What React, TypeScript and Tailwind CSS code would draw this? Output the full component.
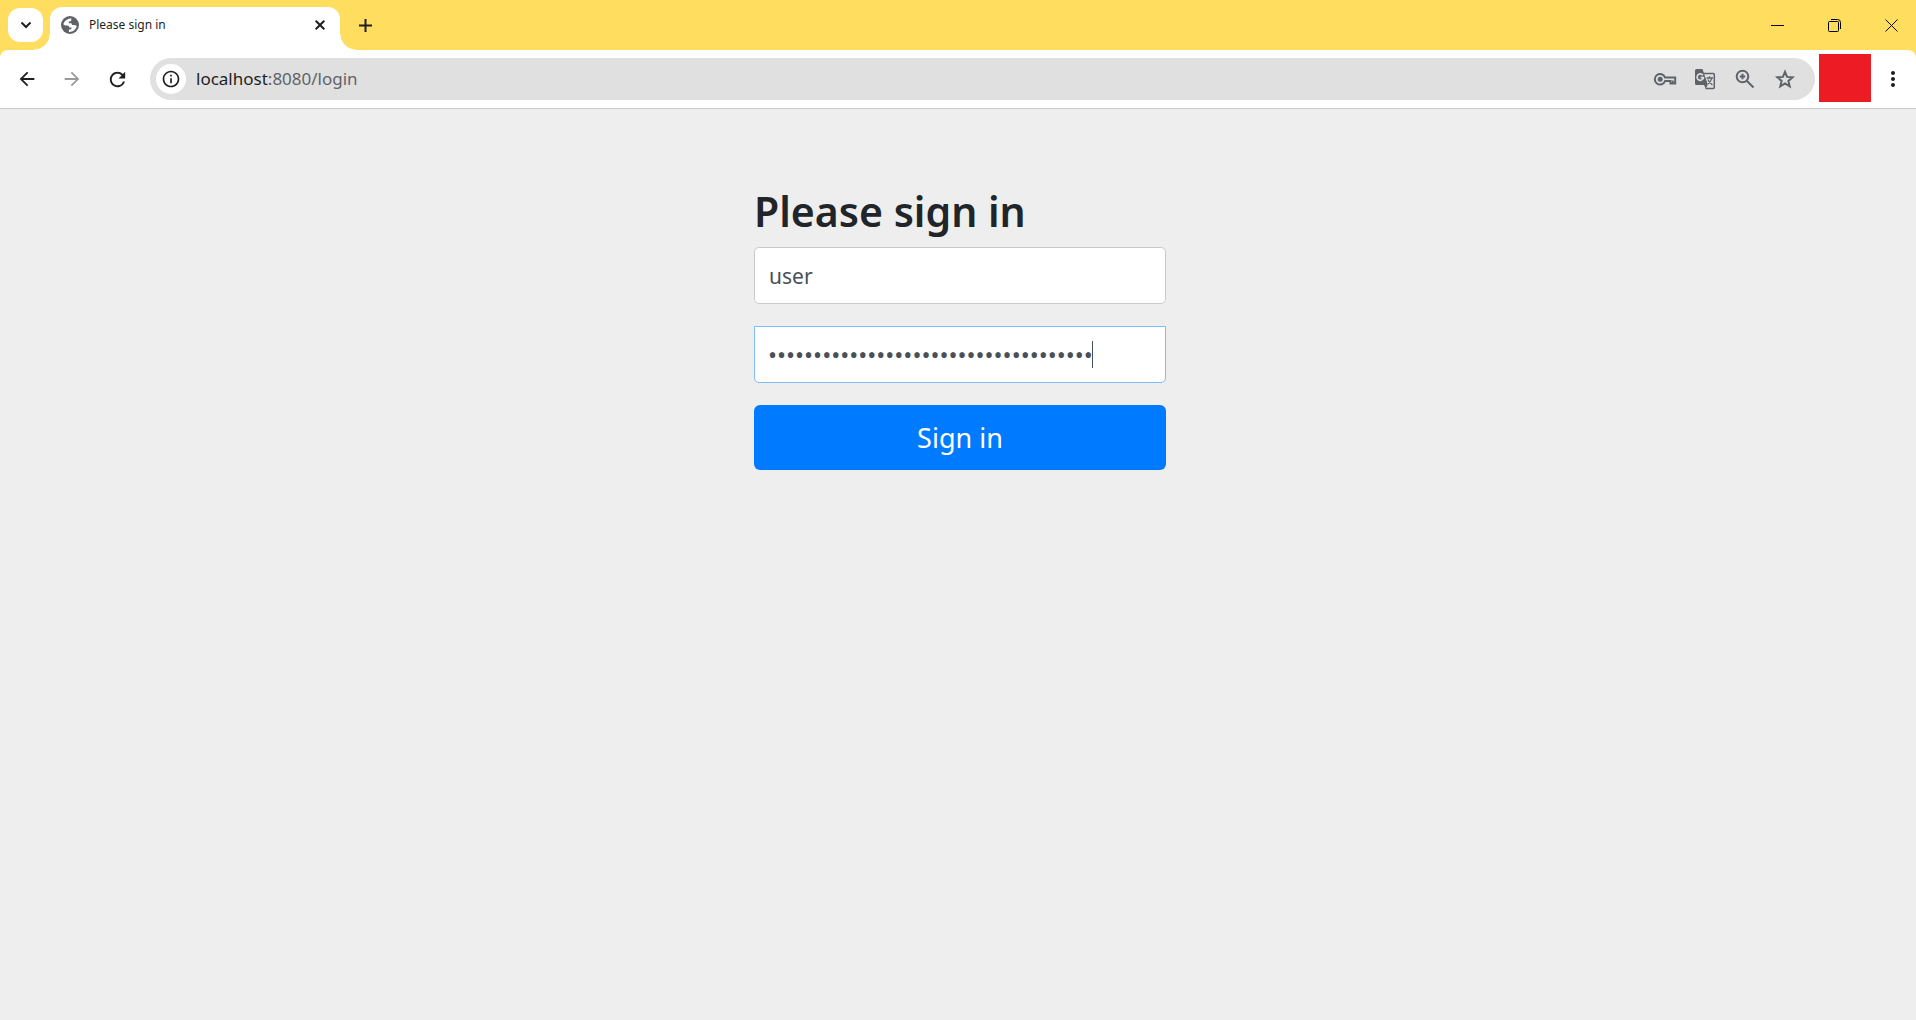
import { MdArrowBack, MdArrowForward, MdRefresh, MdInfoOutline, MdMoreVert } from "react-icons/md";

function GlobeIcon() {
  return (
    <svg width="18" height="18" viewBox="0 0 18 18">
      <circle cx="9" cy="9" r="9" fill="#5f6368" />
      <path d="M10.300 2.200C7 2.400 3.600 4.600 2.300 8.200c1 1 2.300 1.300 3.900 1.200 1.400 0 2 .8 2.100 2h2.300c.3 1.500-1 2-2.700 2.200v2.300c3.700.3 7-2 7.900-5.900-.9-.8-2.100-1-3.600-.9-1 0-1.600-.7-1.700-1.900H7.800c-.5-1.200.3-2 2.400-2.100z" fill="#fff" />
    </svg>
  );
}

function KeyIcon() {
  return (
    <svg width="24" height="24" viewBox="0 0 24 24" fill="none" stroke="currentColor" strokeWidth="2">
      <path d="M12.100 10.500H22.200V16.500H17.500V14H12.100A5.300 5.300 0 1 1 12.100 10.500Z" />
      <path d="M19.800 13.500V17" />
      <circle cx="7.200" cy="12.300" r="2.500" fill="currentColor" stroke="none" />
    </svg>
  );
}

function TranslateIcon() {
  return (
    <svg width="24" height="24" viewBox="0 0 24 24" fill="none">
      <path d="M9 6.500H20.300A1 1 0 0 1 21.300 7.500V20.500A1 1 0 0 1 20.300 21.500H12.500" stroke="currentColor" strokeWidth="1.500" />
      <path d="M3.500 2H9.500L14.800 17.500L12.800 21.800L11 18H3.500A1.500 1.500 0 0 1 2 16.500V3.500A1.500 1.500 0 0 1 3.500 2Z" fill="currentColor" />
      <path d="M9.800 8.200A3.200 3.200 0 1 0 10.400 10.600H7.600" stroke="#e0e0e0" strokeWidth="1.600" />
      <path d="M13.500 11H20M16.500 9.300V11M18.800 11C18.300 14 16.500 15.800 15 17M14.800 12.500C16 15 17.500 16.500 19.500 18" stroke="currentColor" strokeWidth="1.300" />
    </svg>
  );
}

function ZoomIcon() {
  return (
    <svg width="24" height="24" viewBox="0 0 24 24" fill="none" stroke="currentColor" strokeWidth="2">
      <circle cx="9.500" cy="9.500" r="5.800" />
      <path d="M13.700 13.700L20.500 20.500M9.500 6.700V12.300M6.700 9.500H12.300" />
    </svg>
  );
}

function StarIcon() {
  return (
    <svg width="24" height="24" viewBox="0 0 24 24" fill="none" stroke="currentColor" strokeWidth="2">
      <path d="M12 4.800L14.100 9.900L19.600 10.300L15.400 13.900L16.700 19.300L12 16.400L7.300 19.300L8.600 13.900L4.400 10.300L9.900 9.900Z" />
    </svg>
  );
}

function WindowControls() {
  return (
    <div className="ml-auto flex h-full items-center gap-11 pr-[18px]">
      <button aria-label="Minimize">
        <svg width="13" height="13" viewBox="0 0 13 13" stroke="#000" fill="none" shapeRendering="crispEdges"><path d="M0 6.500H13" /></svg>
      </button>
      <button aria-label="Restore">
        <svg width="13" height="13" viewBox="0 0 13 13" stroke="#000" fill="none"><rect x="0.5" y="2.5" width="10" height="10" rx="1" /><path d="M3 .5H9.500A3 3 0 0 1 12.500 3.500V10" /></svg>
      </button>
      <button aria-label="Close">
        <svg width="13" height="13" viewBox="0 0 13 13" stroke="#000" fill="none"><path d="M.5 .5L12.500 12.500M12.500 .5L.5 12.500" /></svg>
      </button>
    </div>
  );
}

function TabStrip() {
  return (
    <header className="flex h-[50px] items-center bg-[#ffdd5e] pl-2">
      <button aria-label="Search tabs" className="flex h-[34px] w-[35px] items-center justify-center rounded-xl bg-white text-[#1f1f1f]">
        <svg width="12" height="12" viewBox="0 0 12 12" fill="none" stroke="currentColor" strokeWidth="2"><path d="M1.500 3.500L6 8L10.500 3.500" /></svg>
      </button>
      <div className="relative ml-[7px] flex h-[43px] w-[290px] items-center self-end rounded-t-xl bg-white pr-[15px] pb-[7px] pl-[11px]">
        <span className="absolute bottom-0 -left-4 size-4 bg-[radial-gradient(circle_at_0_0,transparent_15px,white_16px)]" />
        <span className="absolute -right-4 bottom-0 size-4 bg-[radial-gradient(circle_at_100%_0,transparent_15px,white_16px)]" />
        <GlobeIcon />
        <span className="ml-[10px] text-xs text-[#1f1f1f]">Please sign in</span>
        <button aria-label="Close tab" className="ml-auto text-[#1f1f1f]">
          <svg width="10" height="10" viewBox="0 0 10 10" fill="none" stroke="currentColor" strokeWidth="2"><path d="M.7 .7L9.300 9.300M9.300 .7L.7 9.300" /></svg>
        </button>
      </div>
      <button aria-label="New tab" className="ml-[19px] text-[#1f1f1f]">
        <svg width="13" height="13" viewBox="0 0 13 13" fill="none" stroke="currentColor" strokeWidth="2"><path d="M6.500 0V13M0 6.500H13" /></svg>
      </button>
      <WindowControls />
    </header>
  );
}

function Toolbar() {
  return (
    <div className="bg-[#ffdd5e]">
      <nav className="flex h-[59px] items-center rounded-t-lg border-b border-[#cbcbcb] bg-white pr-[11px] pl-4 text-[#1f1f1f]">
        <button aria-label="Back"><MdArrowBack size={22} /></button>
        <button aria-label="Forward" className="ml-[23px] text-[#9a9a9a]"><MdArrowForward size={22} /></button>
        <button aria-label="Reload" className="ml-[23px]"><MdRefresh size={23} /></button>
        <div className="ml-[21px] flex h-[42px] grow items-center rounded-full bg-[#e0e0e0] pr-[18px] pl-[6px]">
          <button aria-label="Site information" className="flex size-[30px] items-center justify-center rounded-full bg-white"><MdInfoOutline size={20} /></button>
          <a href="#login" className="ml-[10px] text-[17px] text-[#1f1f1f]">localhost<span className="text-[#5f6368]">:8080/login</span></a>
          <div className="ml-auto flex items-center gap-4 text-[#5f6368]">
            <button aria-label="Passwords"><KeyIcon /></button>
            <button aria-label="Translate"><TranslateIcon /></button>
            <button aria-label="Zoom"><ZoomIcon /></button>
            <button aria-label="Bookmark"><StarIcon /></button>
          </div>
        </div>
        <div className="mt-1 ml-1 h-12 w-[52px] self-start bg-[#ed1c24]" />
        <button aria-label="Menu" className="ml-[10px]"><MdMoreVert size={24} /></button>
      </nav>
    </div>
  );
}

export default function App() {
  return (
    <div className="min-h-screen bg-[#eeeeee] font-['Noto_Sans',sans-serif]">
      <TabStrip />
      <Toolbar />
      <main className="flex justify-center pt-[74px] pl-1">
        <form className="flex w-[412px] flex-col" onSubmit={(e) => e.preventDefault()}>
          <h1 className="mb-2 text-[41px] leading-[56px] font-semibold text-[#212529]">Please sign in</h1>
          <input aria-label="Username" defaultValue="user" className="mb-[22px] h-[57px] rounded-[5px] border border-[#c8cacc] bg-white px-[14px] text-[21px] text-[#495057]" />
          <div className="relative mb-[22px] flex">
            <input type="password" aria-label="Password" defaultValue="0b5e1c4a-72d3-4f96-8a1e-5d3c7b9f2e60" className="h-[57px] w-full rounded-b-[5px] border border-[#80bdff] bg-white px-[13px] text-[24px] text-[#495057] outline-none" />
            <span className="absolute top-[15px] left-[338px] h-[27px] w-px bg-[#495057]" />
          </div>
          <button type="submit" className="h-[65px] rounded-md bg-[#007bff] pt-[2px] text-[27px] text-white">Sign in</button>
        </form>
      </main>
    </div>
  );
}
